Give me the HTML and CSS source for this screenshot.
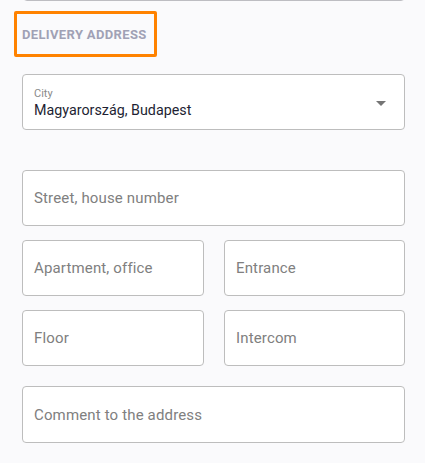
FILE: index.html
```html
<!DOCTYPE html>
<html>
<head>
<meta charset="utf-8">
<link rel="stylesheet" href="styles.css">
</head>
<body>
<div class="page">
  <div class="prev-field"></div>
  <div class="section-title"><span>DELIVERY ADDRESS</span></div>
  <div class="field select">
    <div class="select-text">
      <div class="label">City</div>
      <div class="value">Magyarország, Budapest</div>
    </div>
    <svg class="arrow" width="10" height="5" viewBox="0 0 10 5"><path d="M0 0 L10 0 L5 5 Z" fill="#757575"/></svg>
  </div>
  <div class="field street"><span class="ph">Street, house number</span></div>
  <div class="row">
    <div class="field"><span class="ph">Apartment, office</span></div>
    <div class="field"><span class="ph">Entrance</span></div>
  </div>
  <div class="row row2">
    <div class="field"><span class="ph">Floor</span></div>
    <div class="field"><span class="ph">Intercom</span></div>
  </div>
  <div class="field comment"><span class="ph">Comment to the address</span></div>
</div>
</body>
</html>
```

FILE: styles.css
```css
html, body {
  margin: 0;
  padding: 0;
  background: #fafafc;
}
body {
  font-family: Roboto, "Liberation Sans", sans-serif;
}
.page {
  width: 383px;
  margin-left: 22px;
  display: flex;
  flex-direction: column;
}
.prev-field {
  margin-top: -56px;
  margin-left: 1px;
  width: 380px;
  height: 55px;
  border: 1px solid #bdbdc2;
  border-radius: 4px;
  background: #fff;
}
.section-title {
  margin-top: 10px;
  margin-left: -8px;
  width: 132px;
  height: 40px;
  border: 3px solid #ff8200;
  border-radius: 2px;
  display: flex;
  align-items: center;
  padding-left: 5px;
}
.section-title span {
  font-size: 13px;
  font-weight: 700;
  letter-spacing: 0.35px;
  color: #a0a1b5;
}
.field {
  box-sizing: border-box;
  height: 56px;
  border: 1px solid #bdbdbd;
  border-radius: 4px;
  background: #fff;
  display: flex;
  align-items: center;
  padding-left: 11px;
}
.ph {
  font-size: 15px;
  letter-spacing: 0.15px;
  color: #808080;
}
.select {
  margin-top: 17px;
  justify-content: space-between;
  padding-right: 18px;
}
.select-text {
  display: flex;
  flex-direction: column;
  padding-top: 2px;
}
.label {
  font-size: 11px;
  color: #8a8a8a;
  line-height: 13px;
}
.value {
  font-size: 14.3px;
  color: #1e1f33;
  line-height: 19px;
  margin-top: 1px;
}
.arrow {
  display: block;
  margin-top: 2px;
}
.street {
  margin-top: 40px;
}
.row {
  margin-top: 14px;
  display: grid;
  grid-template-columns: 182px 181px;
  column-gap: 20px;
}
.comment {
  margin-top: 20px;
  height: 57px;
}
```
